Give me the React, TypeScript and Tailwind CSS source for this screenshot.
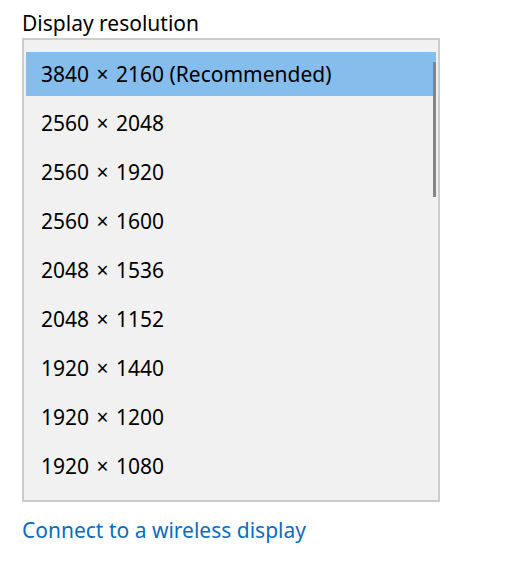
import React from "react";

const items: [string, string, string?][] = [
  ["3840", "2160", " (Recommended)"],
  ["2560", "2048"],
  ["2560", "1920"],
  ["2560", "1600"],
  ["2048", "1536"],
  ["2048", "1152"],
  ["1920", "1440"],
  ["1920", "1200"],
  ["1920", "1080"],
];

export default function App() {
  return (
    <div
      className="w-[505px] h-[574px] bg-white pl-[22px] text-[21px] text-black"
      style={{ fontFamily: '"Noto Sans", "Open Sans", sans-serif' }}
    >
      <div className="h-[38px] pt-[9px] leading-[28px]">Display resolution</div>
      <div className="relative w-[418px] h-[464px] border-2 border-[#cccccc] bg-[#f1f1f1] px-[2px] py-[12px] flex flex-col gap-[5px]">
        {items.map(([a, b, c], i) => (
          <div
            key={a + b}
            className={
              "h-[44px] flex items-center pl-[15px] leading-none " +
              (i === 0 ? "bg-[#85bdec]" : "")
            }
          >
            <span className="whitespace-pre">
              {a + " "}
              <span className="mx-[2px]">×</span>
              {" " + b + (c ?? "")}
            </span>
          </div>
        ))}
        <div className="absolute left-[409px] top-[22px] w-[3px] h-[135px] bg-[#858585]" />
      </div>
      <div className="mt-[14px] leading-[28px] text-[#0b6cbf]">Connect to a wireless display</div>
    </div>
  );
}
